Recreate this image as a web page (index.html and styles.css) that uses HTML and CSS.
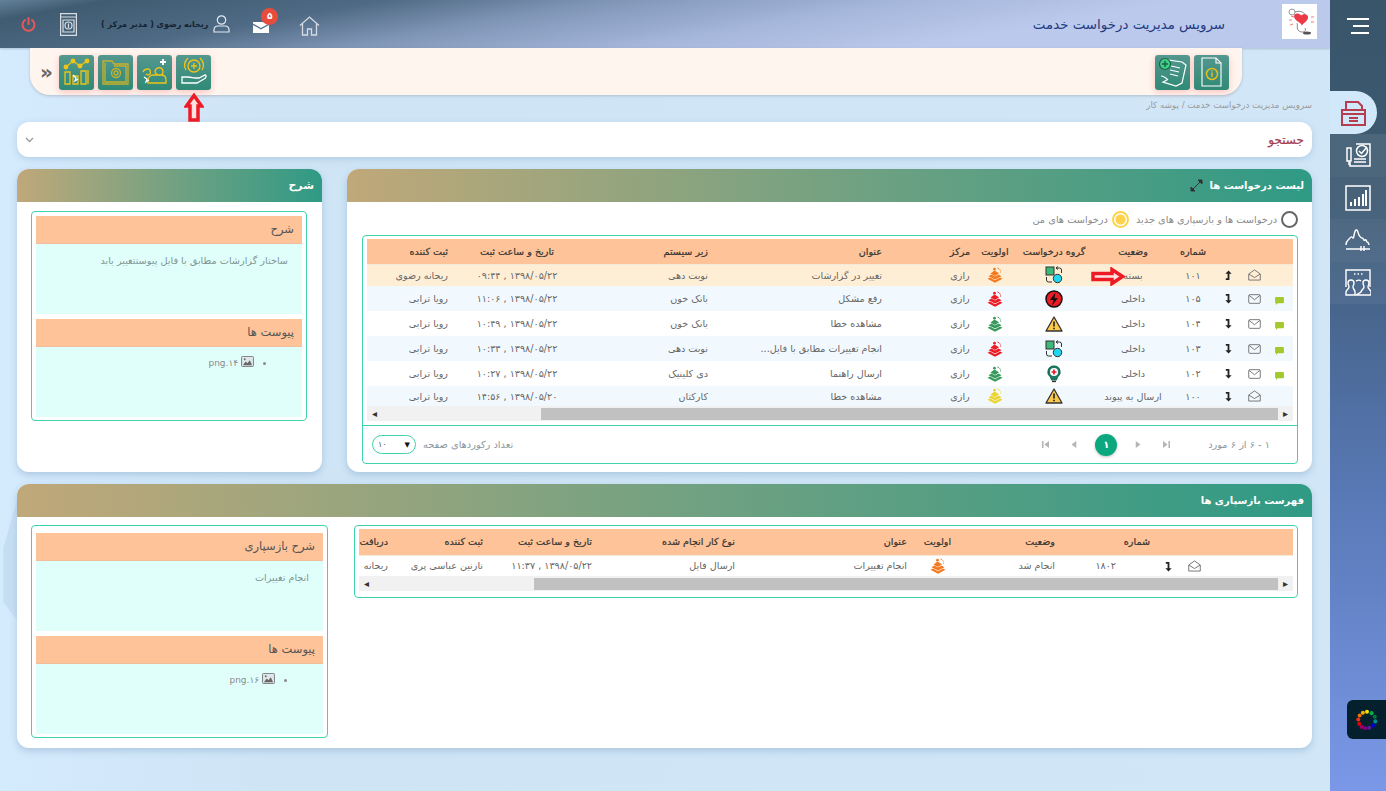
FILE: index.html
```html
<!DOCTYPE html>
<html lang="fa" dir="rtl">
<head>
    <meta charset="UTF-8">
    <meta name="viewport" content="width=device-width, initial-scale=1.0">
    <title>سرویس مدیریت درخواست خدمت</title>
    <link rel="stylesheet" href="styles.css">
</head>
<body>
    <svg class="sprite" xmlns="http://www.w3.org/2000/svg">
        <symbol id="iPrio" viewBox="0 0 16 16">
            <path fill="currentColor" d="M8 15.8 .5 11.8 3 10.6l5 2.600 5-2.600 2.500 1.200z"/>
            <path fill="currentColor" d="M8 12.600 1.500 9.200l3-1.600L8 9.500l3.500-1.900 3 1.600z"/>
            <path fill="currentColor" d="M8 8.900 3.500 6.500 7.500 3.500 12 6.200z"/>
            <circle fill="currentColor" cx="7.500" cy="2.200" r="1.400"/>
            <path fill="none" stroke="currentColor" stroke-width="1" stroke-dasharray="1.500 1" d="M10.500 1c2 .5 3.200 2 3 4.500"/>
        </symbol>
        <symbol id="iMail" viewBox="0 0 18 14">
            <rect x="1" y="1" width="16" height="12" rx="1.500" fill="none" stroke="#666" stroke-width="1.200"/>
            <path d="M1.500 2 9 8l7.500-6" fill="none" stroke="#666" stroke-width="1.200"/>
        </symbol>
        <symbol id="iOpen" viewBox="0 0 18 16">
            <path d="M1 6.500 9 1l8 5.500V15H1z" fill="none" stroke="#666" stroke-width="1.200"/>
            <path d="M1.500 7 9 11.500 16.500 7" fill="none" stroke="#666" stroke-width="1.200"/>
        </symbol>
        <symbol id="iDown" viewBox="0 0 10 12">
            <path d="M2 1h4v7h2.500L5 11.500 1.500 8H4V3H2z" fill="#222"/>
        </symbol>
        <symbol id="iUp" viewBox="0 0 10 12">
            <path d="M2 11h4V4h2.500L5 .5 1.500 4H4v5H2z" fill="#222"/>
        </symbol>
        <symbol id="iChat" viewBox="0 0 10 9">
            <path d="M1 0h8a1 1 0 0 1 1 1v5a1 1 0 0 1-1 1H3L1 9V7a1 1 0 0 1-1-1V1a1 1 0 0 1 1-1z" fill="#a4c92c"/>
        </symbol>
        <symbol id="iSwap" viewBox="0 0 18 18">
            <rect x="1" y="1" width="8" height="8" fill="#3cb878" stroke="#333"/>
            <circle cx="12.500" cy="12.500" r="4.200" fill="#1fd5f0" stroke="#333"/>
            <path d="M11 2h3.500a2 2 0 0 1 2 2v3M11 2l2-1.500M11 2l2 1.500M7 16H3.500a2 2 0 0 1-2-2v-3" fill="none" stroke="#333"/>
        </symbol>
        <symbol id="iBolt" viewBox="0 0 18 18">
            <circle cx="9" cy="9" r="8" fill="#ed1c24" stroke="#111" stroke-width="1.500"/>
            <path d="M10.500 2.500 5 10h3.500L7 15.500 13 8H9.500z" fill="#111"/>
        </symbol>
        <symbol id="iWarn" viewBox="0 0 18 16">
            <path d="M9 1 17 15H1z" fill="#fdc94b" stroke="#333" stroke-width="1.300" stroke-linejoin="round"/>
            <path d="M9 5.500v5M9 11.800v1.500" stroke="#222" stroke-width="1.600"/>
        </symbol>
        <symbol id="iBulb" viewBox="0 0 16 18">
            <path d="M8 1a6 6 0 0 0-3.500 11L5.500 15h5l1-3A6 6 0 0 0 8 1z" fill="#1b7a68" stroke="#164"/>
            <circle cx="8" cy="7" r="4" fill="#fff"/>
            <path d="M8 4.500v5M5.500 7h5" stroke="#e81c2c" stroke-width="1.700"/>
            <path d="M6 16.500h4" stroke="#333" stroke-width="1.300"/>
        </symbol>
        <symbol id="iPic" viewBox="0 0 14 12">
            <rect x=".5" y=".5" width="13" height="11" rx="1" fill="#dfe7ea" stroke="#777"/>
            <path d="M2 10l3-4 2 2 2.500-3.500L12 10z" fill="#666"/>
            <circle cx="4" cy="3.500" r="1" fill="#666"/>
        </symbol>
    </svg>

    <aside class="sideBar">
        <div class="sideMenu">
            <span class="menuLine"></span>
            <span class="menuLine lineShort"></span>
            <span class="menuLine lineMid"></span>
        </div>
        <div class="sideItem sideActive">
            <svg width="27" height="26" viewBox="0 0 27 26" fill="none" stroke="#b73c4e" stroke-width="2">
                <path d="M6 10V2h12l4 4v4"/>
                <path d="M2 10h23v15H2z"/>
                <path d="M2 14h23M9 18h9M9 21h9"/>
            </svg>
        </div>
        <div class="sideItem">
            <svg width="28" height="26" viewBox="0 0 28 26" fill="none" stroke="#fff" stroke-width="1.500">
                <path d="M12 2h14v22H6v-4"/>
                <circle cx="18" cy="9" r="5.500"/>
                <path d="m15 9 2.500 2.500L23 5"/>
                <path d="M3 6h4v13H3zM5 19v4M10 17h12M10 20h12"/>
            </svg>
        </div>
        <div class="sideItem">
            <svg width="26" height="26" viewBox="0 0 26 26" fill="none" stroke="#fff" stroke-width="1.500">
                <path d="M1 1h24v24H1z"/>
                <path d="M6 21v-4M10 21v-7M14 21v-9M18 21V9M21 21V5" stroke-width="2"/>
            </svg>
        </div>
        <div class="sideItem">
            <svg width="26" height="24" viewBox="0 0 26 24" fill="none" stroke="#fff" stroke-width="1.400">
                <path d="M1 17c0-5 3-5 4-7s2-1 3 0 1-7 3-8 2 4 3 5 1 3 3 3 1 3 3 2 1 2 2 2 2 2 2 3"/>
                <path d="M1 21h24M16 18v5M19 18v5"/>
            </svg>
        </div>
        <div class="sideItem">
            <svg width="26" height="27" viewBox="0 0 26 27" fill="none" stroke="#fff" stroke-width="1.400">
                <path d="M1 18V1h24v17"/>
                <path d="M9 5h1.500M12.500 5H14M16 5h1.500"/>
                <path d="M1 26v-3c0-2 3-3 3-5s-1-2-1-4 1-3 3-3 3 1 3 3-1 2-1 4 2 3 2 5v3zM11 26h15v-3c0-2-3-3-3-5s1-2 1-4-1-3-3-3-3 1-3 3 1 2 1 4-3 3-3 5zM11 12c2-1 4-1 5 0"/>
            </svg>
        </div>
    </aside>

    <main class="mainArea">
        <header class="topBar">
            <div class="logoBox">
                <svg width="32" height="32" viewBox="0 0 32 32" fill="none">
                    <circle cx="8" cy="6" r="3" stroke="#999"/>
                    <path d="M11 6c6-2 10 1 11 4M21 22c2 4-3 5-6 3-3-2-1-6-2-8" stroke="#555" stroke-width=".7"/>
                    <path d="M19 24c0-4-10-6-10-12 0-4 6-5 9-1 3-3 9-2 9 2 0 5-7 8-8 11z" transform="translate(3 1) scale(.78)" fill="#ec3945"/>
                    <path d="M8 14h-3M9 18l-3 1M27 11h3M27 16h3M10 11l-3-1" stroke="#f77"/>
                    <ellipse cx="23" cy="27" rx="4" ry="1.500" fill="#555"/>
                </svg>
            </div>
            <h1 class="appTitle">سرویس مدیریت درخواست خدمت</h1>
            <div class="topTools">
                <svg class="homeIcon" width="21" height="20" viewBox="0 0 21 20" fill="none" stroke="#d5dbe3" stroke-width="1.300">
                    <path d="M1 9.500 10.500 1 20 9.500M3.500 8v11h5v-6h4v6h5V8"/>
                </svg>
                <div class="mailBox">
                    <svg width="16" height="12" viewBox="0 0 16 12">
                        <path d="M0 1h16v1.500L8 7 0 2.500zM0 4l8 4.500L16 4v8H0z" fill="#fff"/>
                    </svg>
                    <span class="mailBadge">۵</span>
                </div>
                <svg class="userIcon" width="17" height="18" viewBox="0 0 17 18" fill="none" stroke="#e3e8ee" stroke-width="1.200">
                    <circle cx="8.500" cy="5" r="4.200"/>
                    <path d="M1 17v-2.500A4 4 0 0 1 5 11h7a4 4 0 0 1 4 3.500V17z"/>
                </svg>
                <span class="userName">ریحانه رضوی ( مدیر مرکز )</span>
                <svg class="formIcon" width="17" height="23" viewBox="0 0 17 23" fill="none" stroke="#d8dde4" stroke-width="1.200">
                    <path d="M.6.6h15.800v21.800H.6zM.6 4h15.800"/>
                    <path d="M3 7h11v12H3z"/>
                    <circle cx="8.500" cy="12.500" r="3.500"/>
                    <path d="M8.500 11v4M8.500 9.800v.6"/>
                </svg>
                <svg class="powerIcon" width="15" height="15" viewBox="0 0 15 15" fill="none" stroke="#ea5757" stroke-width="2" stroke-linecap="round">
                    <path d="M4 3a6 6 0 1 0 7 0M7.500 1v6"/>
                </svg>
            </div>
        </header>

        <div class="toolBar">
            <div class="toolBtn">
                <svg width="26" height="30" viewBox="0 0 26 30" fill="none" stroke="#fff" stroke-width="1.100">
                    <path d="M3 1h14l5 5v23H3z"/>
                    <path d="M17 1v5h5"/>
                    <circle cx="13" cy="17" r="5.500" stroke="#e7bd1d" stroke-width="1.500"/>
                    <path d="M13 15.500V20M13 13.500v1" stroke="#e7bd1d" stroke-width="1.500"/>
                </svg>
            </div>
            <div class="toolBtn">
                <svg width="30" height="30" viewBox="0 0 30 30" fill="none" stroke="#fff" stroke-width="1.200">
                    <path d="M10 6V3l14 2 4 3-4 18-6 3-13-4 4-2"/>
                    <path d="M13 9l9 2M12 13l9 2M12 17l8 2M3 19c3 0 5 2 7 4"/>
                    <circle cx="7" cy="7" r="5.500" fill="#3fcf80" stroke="#17614f"/>
                    <path d="M7 4v6M4 7h6" stroke="#17614f" stroke-width="1.400"/>
                </svg>
            </div>
            <div class="toolBtn toolLeft">
                <svg width="30" height="32" viewBox="0 0 30 32" fill="none" stroke="#f0c419" stroke-width="1.300">
                    <circle cx="15" cy="10" r="6"/>
                    <path d="M15 7v6M12 10h6"/>
                    <path d="M7 14C4 9 6 5 9 2M23 14c3-5 1-9-2-12"/>
                    <path d="M3 21h6c3 0 5 1 7 1h4l6-3c2 0 1 3-1 4l-7 4H3z" stroke="#fff"/>
                </svg>
            </div>
            <div class="toolBtn">
                <svg width="30" height="28" viewBox="0 0 30 28" fill="none" stroke="#f0c419" stroke-width="1.300">
                    <path d="M3 14c1-3 3-3 5-3 2-1 3 4 2 5s-3 1-4 0M15 13c2-5 8-4 8 1 0 3-3 4-5 3s-3-2-3-4zM8 25v-3c0-3 3-5 5-5h8c3 0 5 2 5 5v3z"/>
                    <path d="M23 7v-6M20 4h6" stroke="#fff" stroke-width="1.800"/>
                    <path d="m4 19 3 2-1 3 3-2" stroke="#fff"/>
                </svg>
            </div>
            <div class="toolBtn">
                <svg width="30" height="30" viewBox="0 0 30 30" fill="none" stroke="#c8b12b" stroke-width="1.300">
                    <path d="M2 4h9l2 3h14v20H2z"/>
                    <path d="M4 6v19h21V9H13"/>
                    <circle cx="15" cy="16" r="4.500"/>
                    <circle cx="15" cy="16" r="2"/>
                </svg>
            </div>
            <div class="toolBtn">
                <svg width="30" height="30" viewBox="0 0 30 30" fill="none" stroke="#f0c419" stroke-width="1.300">
                    <path d="M3 27V15h5v12zM11 27V19h5v8zM19 27V14h5v13zM26 27V13"/>
                    <path d="m4 10 7-6 7 5 7-5" stroke-width="1.200"/>
                    <circle cx="4" cy="10" r="1.800" fill="#f0c419"/>
                    <circle cx="11" cy="4" r="1.800" fill="#f0c419"/>
                    <circle cx="18" cy="9" r="1.800" fill="#f0c419"/>
                    <circle cx="25" cy="4" r="1.800" fill="#f0c419"/>
                    <path d="m11 18 3 3-1 3 3-2" stroke="#fff"/>
                </svg>
            </div>
            <span class="toolMore">«</span>
            <svg class="noteUp" width="20" height="29" viewBox="0 0 20 29" fill="#ffe3e3" stroke="#ed1c24" stroke-width="3.500">
                <path d="M10 2.500 17.500 13H14v14H6V13H2.500z"/>
            </svg>
        </div>

        <p class="breadCrumb">سرویس مدیریت درخواست خدمت / پوشه کار</p>

        <div class="searchCard">
            <span class="searchTitle">جستجو</span>
            <svg width="9" height="6" viewBox="0 0 9 6" fill="none" stroke="#999" stroke-width="1.300">
                <path d="m1 1 3.500 3.500L8 1"/>
            </svg>
        </div>

        <div class="panelRow">
            <section class="panel listPanel">
                <div class="panelHead">
                    <span>لیست درخواست ها</span>
                    <svg width="13" height="13" viewBox="0 0 13 13" fill="#333" stroke="#333">
                        <path d="M8 1h4v4zM1 8v4h4zM11 2 2 11" />
                    </svg>
                </div>
                <div class="radioRow">
                    <span class="radio"></span>
                    <label class="radioText">درخواست ها و بازسپاری های جدید</label>
                    <span class="radio radioOn"></span>
                    <label class="radioText">درخواست های من</label>
                </div>
                <div class="tableBox">
                    <div class="tableWrap">
                        <table class="dataTable mainTable">
                            <colgroup>
                                <col class="cChat"><col class="cEnv"><col class="cArrow"><col class="cNum"><col class="cState"><col class="cGroup"><col class="cPrio"><col class="cCenter"><col class="cTitle"><col class="cSub"><col class="cDate"><col class="cUser">
                            </colgroup>
                            <thead>
                                <tr>
                                    <th></th><th></th><th></th>
                                    <th class="mid">شماره</th>
                                    <th class="mid">وضعیت</th>
                                    <th class="mid">گروه درخواست</th>
                                    <th class="mid">اولویت</th>
                                    <th class="mid">مرکز</th>
                                    <th class="padTitle">عنوان</th>
                                    <th class="padSub">زیر سیستم</th>
                                    <th class="mid">تاریخ و ساعت ثبت</th>
                                    <th class="padUser">ثبت کننده</th>
                                </tr>
                            </thead>
                            <tbody>
                                <tr class="rowPicked">
                                    <td></td>
                                    <td class="mid"><svg class="env"><use href="#iOpen"/></svg></td>
                                    <td class="mid"><svg class="arrowIcon"><use href="#iUp"/></svg></td>
                                    <td class="mid">۱۰۱</td>
                                    <td class="mid stateCell">بسته
                                        <svg class="noteRight" width="34" height="19" viewBox="0 0 34 19" fill="#ffe3e3" stroke="#ed1c24" stroke-width="3.500">
                                            <path d="M2 6.500h19V2.500l10.500 7L21 16.500v-4H2z"/>
                                        </svg>
                                    </td>
                                    <td class="mid"><svg class="groupIcon"><use href="#iSwap"/></svg></td>
                                    <td class="mid"><svg class="prioIcon prioOrange"><use href="#iPrio"/></svg></td>
                                    <td class="mid">رازی</td>
                                    <td class="padTitle">تغییر در گزارشات</td>
                                    <td class="padSub">نوبت دهی</td>
                                    <td class="mid">۱۳۹۸/۰۵/۲۲ , ۰۹:۴۴</td>
                                    <td class="padUser">ریحانه رضوی</td>
                                </tr>
                                <tr class="rowTint">
                                    <td class="mid"><svg class="chatIcon"><use href="#iChat"/></svg></td>
                                    <td class="mid"><svg class="env"><use href="#iMail"/></svg></td>
                                    <td class="mid"><svg class="arrowIcon"><use href="#iDown"/></svg></td>
                                    <td class="mid">۱۰۵</td>
                                    <td class="mid">داخلی</td>
                                    <td class="mid"><svg class="groupIcon"><use href="#iBolt"/></svg></td>
                                    <td class="mid"><svg class="prioIcon prioRed"><use href="#iPrio"/></svg></td>
                                    <td class="mid">رازی</td>
                                    <td class="padTitle">رفع مشکل</td>
                                    <td class="padSub">بانک خون</td>
                                    <td class="mid">۱۳۹۸/۰۵/۲۲ , ۱۱:۰۶</td>
                                    <td class="padUser">رویا ترابی</td>
                                </tr>
                                <tr>
                                    <td class="mid"><svg class="chatIcon"><use href="#iChat"/></svg></td>
                                    <td class="mid"><svg class="env"><use href="#iMail"/></svg></td>
                                    <td class="mid"><svg class="arrowIcon"><use href="#iDown"/></svg></td>
                                    <td class="mid">۱۰۴</td>
                                    <td class="mid">داخلی</td>
                                    <td class="mid"><svg class="groupIcon"><use href="#iWarn"/></svg></td>
                                    <td class="mid"><svg class="prioIcon prioGreen"><use href="#iPrio"/></svg></td>
                                    <td class="mid">رازی</td>
                                    <td class="padTitle">مشاهده خطا</td>
                                    <td class="padSub">بانک خون</td>
                                    <td class="mid">۱۳۹۸/۰۵/۲۲ , ۱۰:۴۹</td>
                                    <td class="padUser">رویا ترابی</td>
                                </tr>
                                <tr class="rowTint">
                                    <td class="mid"><svg class="chatIcon"><use href="#iChat"/></svg></td>
                                    <td class="mid"><svg class="env"><use href="#iMail"/></svg></td>
                                    <td class="mid"><svg class="arrowIcon"><use href="#iDown"/></svg></td>
                                    <td class="mid">۱۰۳</td>
                                    <td class="mid">داخلی</td>
                                    <td class="mid"><svg class="groupIcon"><use href="#iSwap"/></svg></td>
                                    <td class="mid"><svg class="prioIcon prioRed"><use href="#iPrio"/></svg></td>
                                    <td class="mid">رازی</td>
                                    <td class="padTitle">انجام تغییرات مطابق با فایل...</td>
                                    <td class="padSub">نوبت دهی</td>
                                    <td class="mid">۱۳۹۸/۰۵/۲۲ , ۱۰:۳۳</td>
                                    <td class="padUser">رویا ترابی</td>
                                </tr>
                                <tr>
                                    <td class="mid"><svg class="chatIcon"><use href="#iChat"/></svg></td>
                                    <td class="mid"><svg class="env"><use href="#iMail"/></svg></td>
                                    <td class="mid"><svg class="arrowIcon"><use href="#iDown"/></svg></td>
                                    <td class="mid">۱۰۲</td>
                                    <td class="mid">داخلی</td>
                                    <td class="mid"><svg class="groupIcon"><use href="#iBulb"/></svg></td>
                                    <td class="mid"><svg class="prioIcon prioGreen"><use href="#iPrio"/></svg></td>
                                    <td class="mid">رازی</td>
                                    <td class="padTitle">ارسال راهنما</td>
                                    <td class="padSub">دی کلینیک</td>
                                    <td class="mid">۱۳۹۸/۰۵/۲۲ , ۱۰:۲۷</td>
                                    <td class="padUser">رویا ترابی</td>
                                </tr>
                                <tr class="rowTint rowEnd">
                                    <td></td>
                                    <td class="mid"><svg class="env"><use href="#iOpen"/></svg></td>
                                    <td class="mid"><svg class="arrowIcon"><use href="#iDown"/></svg></td>
                                    <td class="mid">۱۰۰</td>
                                    <td class="mid">ارسال به پیوند</td>
                                    <td class="mid"><svg class="groupIcon"><use href="#iWarn"/></svg></td>
                                    <td class="mid"><svg class="prioIcon prioYellow"><use href="#iPrio"/></svg></td>
                                    <td class="mid">رازی</td>
                                    <td class="padTitle">مشاهده خطا</td>
                                    <td class="padSub">کارکتان</td>
                                    <td class="mid">۱۳۹۸/۰۵/۲۰ , ۱۴:۵۶</td>
                                    <td class="padUser">رویا ترابی</td>
                                </tr>
                            </tbody>
                        </table>
                        <div class="scrollBar">
                            <span class="scrollEnd">▸</span>
                            <span class="scrollThumb thumbOne"></span>
                            <span class="scrollEnd scrollLeft">◂</span>
                        </div>
                    </div>
                    <div class="tableFoot">
                        <span class="pageInfo">۱ - ۶ از ۶ مورد</span>
                        <div class="pager">
                            <svg class="pageIcon pageOuter" viewBox="0 0 9 9"><path d="M0 0l6 4.500L0 9zM7 0h2v9H7z"/></svg>
                            <svg class="pageIcon" viewBox="0 0 9 9"><path d="M1 0l6 4.500L1 9z"/></svg>
                            <span class="pageNow">۱</span>
                            <svg class="pageIcon" viewBox="0 0 9 9"><path d="M8 0 2 4.500 8 9z"/></svg>
                            <svg class="pageIcon pageOuterEnd" viewBox="0 0 9 9"><path d="M9 0 3 4.500 9 9zM0 0h2v9H0z"/></svg>
                        </div>
                        <div class="pageSize">
                            <span>تعداد رکوردهای صفحه</span>
                            <div class="sizeSelect"><span class="sizeArrow">▼</span><span>۱۰</span></div>
                        </div>
                    </div>
                </div>
            </section>

            <section class="panel notePanel">
                <div class="panelHead"><span>شرح</span></div>
                <div class="noteBox">
                    <h3 class="noteHead">شرح</h3>
                    <div class="noteBody">
                        <p class="noteText">ساختار گزارشات مطابق با فایل پیوستتغییر یابد</p>
                    </div>
                    <h3 class="noteHead noteGap">پیوست ها</h3>
                    <div class="noteBody">
                        <ul class="fileList">
                            <li><svg class="picIcon"><use href="#iPic"/></svg> ۱۴.png</li>
                        </ul>
                    </div>
                </div>
            </section>
        </div>

        <section class="panel referPanel">
            <div class="panelHead"><span>فهرست بازسپاری ها</span></div>
            <div class="referRow">
                <div class="tableBox referBox">
                    <div class="tableWrap">
                        <table class="dataTable referTable">
                            <colgroup>
                                <col class="rEmpty"><col class="rEnv"><col class="rArrow"><col class="rNum"><col class="rState"><col class="rPrio"><col class="rTitle"><col class="rKind"><col class="rDate"><col class="rUser"><col class="rGet">
                            </colgroup>
                            <thead>
                                <tr>
                                    <th></th><th></th><th></th>
                                    <th class="padNumHead">شماره</th>
                                    <th class="padState">وضعیت</th>
                                    <th class="mid">اولویت</th>
                                    <th class="padTitleTwo">عنوان</th>
                                    <th class="padKind">نوع کار انجام شده</th>
                                    <th class="padTitleTwo">تاریخ و ساعت ثبت</th>
                                    <th class="padUserTwo">ثبت کننده</th>
                                    <th class="padTitleTwo">دریافت</th>
                                </tr>
                            </thead>
                            <tbody>
                                <tr>
                                    <td></td>
                                    <td class="mid"><svg class="env"><use href="#iOpen"/></svg></td>
                                    <td class="mid"><svg class="arrowIcon"><use href="#iDown"/></svg></td>
                                    <td class="padNumCell">۱۸۰۲</td>
                                    <td class="padState">انجام شد</td>
                                    <td class="mid"><svg class="prioIcon prioOrange"><use href="#iPrio"/></svg></td>
                                    <td class="padTitleTwo">انجام تغییرات</td>
                                    <td class="padKind">ارسال فایل</td>
                                    <td class="padTitleTwo">۱۳۹۸/۰۵/۲۲ , ۱۱:۳۷</td>
                                    <td class="padUserTwo">نازنین عباسی پری</td>
                                    <td class="padTitleTwo">ریحانه</td>
                                </tr>
                            </tbody>
                        </table>
                        <div class="scrollBar">
                            <span class="scrollEnd">▸</span>
                            <span class="scrollThumb thumbTwo"></span>
                            <span class="scrollEnd scrollLeft">◂</span>
                        </div>
                    </div>
                </div>
                <div class="noteBox noteBoxWide">
                    <h3 class="noteHead">شرح بازسپاری</h3>
                    <div class="noteBody">
                        <p class="noteText">انجام تغییرات</p>
                    </div>
                    <h3 class="noteHead noteGap">پیوست ها</h3>
                    <div class="noteBody">
                        <ul class="fileList">
                            <li><svg class="picIcon"><use href="#iPic"/></svg> ۱۶.png</li>
                        </ul>
                    </div>
                </div>
            </div>
        </section>
    </main>

    <div class="colorBtn">
        <svg width="22" height="22" viewBox="0 0 24 24">
            <circle cx="12" cy="3" r="2.200" fill="#f2e205"/>
            <circle cx="17" cy="4.500" r="2.200" fill="#00b050"/>
            <circle cx="20.500" cy="8.500" r="2.200" fill="#007a3d"/>
            <circle cx="21" cy="13.500" r="2.200" fill="#008c95"/>
            <circle cx="18.500" cy="18" r="2.200" fill="#0000e0"/>
            <circle cx="14.500" cy="20.500" r="2.200" fill="#5b1a9a"/>
            <circle cx="10" cy="21" r="2.200" fill="#800080"/>
            <circle cx="6" cy="19.500" r="2.200" fill="#990066"/>
            <circle cx="3.500" cy="16" r="2.200" fill="#e00000"/>
            <circle cx="2.500" cy="11.500" r="2.200" fill="#f03010"/>
            <circle cx="4" cy="7" r="2.200" fill="#f07000"/>
            <circle cx="7.500" cy="4" r="2.200" fill="#f8b000"/>
        </svg>
    </div>
</body>
</html>
```

FILE: styles.css
```css
* {
    box-sizing: border-box;
}
html,
body {
    height: 100%;
}
body {
    display: flex;

    margin: 0;

    height: 791px;

    overflow: hidden;

    background: linear-gradient(to right, #d4eafd 0, #cfe5f6 20%, #d1e7f8 100%);

    font-family: "DejaVu Sans", sans-serif;
    font-size: 9px;
    color: #666;
}
body::before {
    content: "";

    position: absolute;
    top: 500px;
    left: 0;

    width: 17px;
    height: 120px;

    background-color: rgba(165, 195, 220, 0.3);

    clip-path: polygon(100% 0, 100% 100%, 20% 85%, 20% 40%);
}
.sprite {
    display: none;
}

/* side bar */
.sideBar {
    flex: 0 0 56px;

    background: linear-gradient(to bottom, #38556a 0, #3e5a72 25%, #4f6ea0 50%, #5878b5 62%, #7b98e8 100%);
}
.sideMenu {
    display: flex;
    flex-direction: column;
    align-items: flex-start;
    gap: 5px;

    height: 91px;

    padding: 18px 17px 0 0;
}
.menuLine {
    width: 22px;
    height: 2px;

    background-color: #fff;
}
.lineShort {
    width: 16px;
}
.lineMid {
    width: 18px;
}
.sideItem {
    display: flex;
    align-items: center;
    justify-content: center;

    height: 42.5px;

    background-color: rgba(255, 255, 255, 0.08);
}
.sideItem:nth-child(even) {
    background-color: rgba(255, 255, 255, 0.05);
}
.sideActive,
.sideActive:nth-child(even) {
    margin-right: 9px;

    height: 43px;

    border-radius: 0 22px 22px 0;

    background-color: #d1e8fb;
}

.mainArea {
    flex: 1;

    min-width: 0;
}

/* top bar */
.topBar {
    display: flex;
    align-items: center;

    height: 48px;

    padding-right: 13px;

    background: linear-gradient(170deg, #64819a 0, #3f5c72 7%, #4f6a84 24%, #7f95b6 38%, #a4b6da 56%, #bbc9ec 74%, #bbc9ec 100%);
    box-shadow: 0 1px 2px rgba(60, 80, 100, 0.25);
}
.logoBox {
    display: flex;
    align-items: center;
    justify-content: center;

    margin-top: -5px;

    width: 35px;
    height: 35px;

    background-color: #fff;
}
.appTitle {
    margin: 0 57px 0 0;

    font-size: 13.4px;
    font-weight: normal;
    color: #1f3a80;
}
.topTools {
    display: flex;
    align-items: center;

    margin-right: auto;
    padding-left: 21px;
}
.homeIcon {
    margin: 4px 0 0 30px;
}
.mailBox {
    position: relative;

    margin-top: 6px;
    padding-top: 2px;

    width: 16px;
}
.mailBadge {
    position: absolute;
    top: -11px;
    right: -9px;

    width: 17px;
    height: 17px;

    border-radius: 50%;

    background-color: #e74c3c;

    line-height: 17px;
    font-size: 9px;
    font-weight: bold;
    text-align: center;
    color: #fff;
}
.userIcon {
    margin: 0 23px 0 5px;
}
.userName {
    font-size: 8px;
    font-weight: bold;
    color: #16222e;
    white-space: nowrap;
}
.formIcon {
    margin-right: 24px;
}
.powerIcon {
    margin-right: 24px;
}

/* tool bar */
.toolBar {
    position: relative;

    display: flex;
    align-items: center;
    gap: 4px;

    margin: 0 88px 0 30px;

    height: 47px;

    padding: 1px 13px 0 8px;

    border-radius: 0 0 20px 20px;

    background-color: #fff5ef;
    box-shadow: 0 1px 3px rgba(100, 100, 100, 0.3);
}
.toolBtn {
    display: flex;
    align-items: center;
    justify-content: center;

    width: 35px;
    height: 35px;

    border-radius: 3px;

    background: linear-gradient(to bottom, #54978f 0, #2f8a76 100%);
    box-shadow: 0 2px 7px rgba(240, 120, 120, 0.4);
}
.toolLeft {
    margin-right: auto;
}
.toolMore {
    width: 17px;

    font-size: 20px;
    line-height: 30px;
    font-weight: bold;
    text-align: center;
    color: #666;
}
.noteUp {
    position: absolute;
    top: 45px;
    left: 154px;
}
.breadCrumb {
    margin: 0;

    height: 27px;

    padding: 4px 18px 0 0;

    font-size: 8.7px;
    line-height: 12px;
    color: #9a9a9a;
}

/* search */
.searchCard {
    display: flex;
    align-items: center;
    justify-content: space-between;

    margin: 0 18px 12px 17px;

    height: 35px;

    padding: 0 8px;

    border-radius: 12px;

    background-color: #fff;
    box-shadow: 0 2px 6px rgba(90, 130, 170, 0.25);
}
.searchTitle {
    font-size: 12px;
    color: #a33a50;
    -webkit-text-stroke: 0.2px #a33a50;
}

/* panels */
.panelRow {
    display: flex;
    gap: 25px;

    margin: 0 18px 12px 17px;

    height: 303px;
}
.panel {
    border-radius: 12px;

    background-color: #fff;
    box-shadow: 0 3px 7px rgba(90, 130, 170, 0.3);
}
.listPanel {
    flex: 0 0 965px;
}
.notePanel {
    flex: 0 0 305px;
}
.referPanel {
    margin: 0 18px 0 17px;

    height: 264px;
}
.panelHead {
    display: flex;
    align-items: center;
    gap: 7px;

    height: 33px;

    padding: 0 8px;

    border-radius: 12px 12px 0 0;

    background: linear-gradient(to left, #2f9a85 0, #6da182 45%, #c0a879 100%);

    font-size: 10px;
    font-weight: bold;
    color: #fff;
}
.notePanel .panelHead {
    font-size: 11px;
}

.radioRow {
    display: flex;
    align-items: center;

    height: 33px;

    padding: 2px 14px 0 0;
}
.radio {
    width: 17px;
    height: 17px;

    border: 2px solid #666;
    border-radius: 50%;

    background-color: #fff;
}
.radioOn {
    margin-right: 7px;

    border-color: #ffd24d;

    background: radial-gradient(circle, #ffd24d 0, #ffd24d 52%, #fff 58%);
}
.radioText {
    margin-right: 4px;

    font-size: 9.8px;
    color: #8a8a8a;
}

/* tables */
.tableBox {
    margin: 0 14px 0 15px;

    height: 229px;

    border: 1px solid #3fd3ab;
    border-radius: 4px;
}
.tableWrap {
    padding: 3px 4px 4px;
}
.dataTable {
    table-layout: fixed;

    border-collapse: collapse;

    width: 100%;
}
.dataTable th {
    height: 25px;

    padding: 0;

    background-color: #fec398;
    border-bottom: 1px solid #f3ead8;

    font-size: 9.6px;
    font-weight: normal;
    text-align: right;
    color: #333;
    -webkit-text-stroke: 0.2px #333;
    white-space: nowrap;
}
.dataTable td {
    height: 25px;

    padding: 0;

    font-size: 9.6px;
    text-align: right;
    color: #666;
    white-space: nowrap;
}
.mainTable .rowPicked td {
    height: 22px;

    background-color: #ffeed6;
}
.mainTable .rowEnd td {
    height: 20px;
}
.rowTint td {
    background-color: #f2f9fe;
}
.dataTable .mid {
    text-align: center;
}
.cChat { width: 27px; }
.cEnv { width: 24px; }
.cArrow { width: 27px; }
.cNum { width: 44px; }
.cState { width: 76px; }
.cGroup { width: 82px; }
.cPrio { width: 36px; }
.cCenter { width: 34px; }
.cTitle { width: 227px; }
.cSub { width: 151px; }
.cDate { width: 96px; }
.cUser { width: 102px; }
.dataTable .padTitle { padding-right: 61px; }
.dataTable .padSub { padding-right: 8px; }
.dataTable .padUser { padding-right: 21px; }

.rEmpty { width: 87px; }
.rEnv { width: 24px; }
.rArrow { width: 28px; }
.rNum { width: 84px; }
.rState { width: 110px; }
.rPrio { width: 45px; }
.rTitle { width: 171px; }
.rKind { width: 144px; }
.rDate { width: 100px; }
.rUser { width: 104px; }
.rGet { width: 37px; }
.dataTable .padNumHead { padding-right: 4px; }
.dataTable .padNumCell { padding-right: 38px; }
.dataTable .padState { padding-right: 15px; }
.dataTable .padTitleTwo { padding-right: 8px; }
.dataTable .padKind { padding-right: 9px; }
.dataTable .padUserTwo { padding-right: 17px; }
.referTable th {
    height: 26px;
}
.referTable td {
    height: 21px;
}

.stateCell {
    position: relative;
}
.noteRight {
    position: absolute;
    top: 2px;
    left: -4px;
}
.env {
    width: 13px;
    height: 12px;
    vertical-align: middle;
}
.arrowIcon {
    width: 9px;
    height: 11px;
    vertical-align: middle;
}
.chatIcon {
    width: 9px;
    height: 8px;
    vertical-align: -4px;
}
.groupIcon {
    width: 18px;
    height: 18px;
    vertical-align: middle;
}
.prioIcon {
    width: 16px;
    height: 16px;
    vertical-align: middle;
}
.prioOrange { color: #f47a1f; }
.prioRed { color: #ed1c24; }
.prioGreen { color: #379a5b; }
.prioYellow { color: #ecd42e; }

.scrollBar {
    display: flex;
    align-items: center;

    height: 15px;

    background-color: #f1f1f1;
}
.scrollEnd {
    width: 15px;

    font-size: 10px;
    line-height: 15px;
    text-align: center;
    color: #333;
}
.scrollLeft {
    margin-right: auto;
}
.scrollThumb {
    height: 12px;

    background-color: #c1c1c1;
}
.thumbOne {
    width: 737px;
}
.thumbTwo {
    width: 744px;
}

.tableFoot {
    display: flex;
    align-items: center;

    height: 38px;

    border-top: 1px solid #3fd3ab;

    padding: 0 27px 0 9px;

    font-size: 9.8px;
    color: #8a98a0;
}
.pager {
    display: flex;
    align-items: center;
    gap: 18px;

    margin-right: 38px;
}
.pageIcon {
    width: 7px;
    height: 7px;

    fill: #b5b5b5;
}
.pageOuter {
    margin-left: 3px;
}
.pageOuterEnd {
    margin-right: 3px;
}
.pageNow {
    width: 22px;
    height: 22px;

    border-radius: 50%;

    background-color: #0ba880;
    box-shadow: 0 1px 3px rgba(0, 0, 0, 0.25);

    line-height: 22px;
    font-size: 10px;
    font-weight: bold;
    text-align: center;
    color: #fff;
}
.pageSize {
    display: flex;
    align-items: center;
    gap: 7px;

    margin-right: auto;
}
.sizeSelect {
    display: flex;
    align-items: center;
    justify-content: space-between;

    width: 44px;
    height: 19px;

    padding: 0 5px;

    border: 1px solid #3fd3ab;
    border-radius: 10px;

    font-size: 8px;
    color: #555;
}
.sizeArrow {
    font-size: 7px;
    color: #111;
}

/* bottom panel */
.referRow {
    display: flex;
    align-items: flex-start;

    padding: 8px 14px 0;
}
.referBox {
    flex: 1;

    margin: 0 0 0 26px;

    height: 73px;
}
.referBox .tableWrap {
    padding-bottom: 5px;
}

/* description boxes */
.noteBox {
    margin: 9px 15px 0 14px;

    height: 210px;

    padding: 4px;

    border: 1px solid #3fd3ab;
    border-radius: 4px;
}
.noteBoxWide {
    flex: 0 0 297px;

    margin: 0;

    height: 213px;

    padding-top: 7px;
}
.noteHead {
    margin: 0;

    height: 28px;

    padding-right: 8px;

    background-color: #fec398;
    border-bottom: 1px solid #f0bd9d;

    font-size: 11.5px;
    font-weight: normal;
    line-height: 26px;
    color: #555;
}
.noteGap {
    margin-top: 5px;
}
.noteBody {
    height: 70px;

    padding: 11px 14px 0 0;

    background-color: #e0fffa;
}
.noteText {
    margin: 0;

    font-size: 9.7px;
    color: #7f9494;
}
.fileList {
    margin: -2px 34px 0 0;
    padding: 0;

    font-size: 9px;
    color: #8a8a8a;
}
.picIcon {
    width: 13px;
    height: 11px;
    vertical-align: -1px;
}

.colorBtn {
    position: absolute;
    top: 700px;
    right: 0;

    display: flex;
    align-items: center;
    justify-content: center;

    width: 39px;
    height: 39px;

    border-radius: 6px 0 0 6px;

    background-color: #04202c;
}
```
